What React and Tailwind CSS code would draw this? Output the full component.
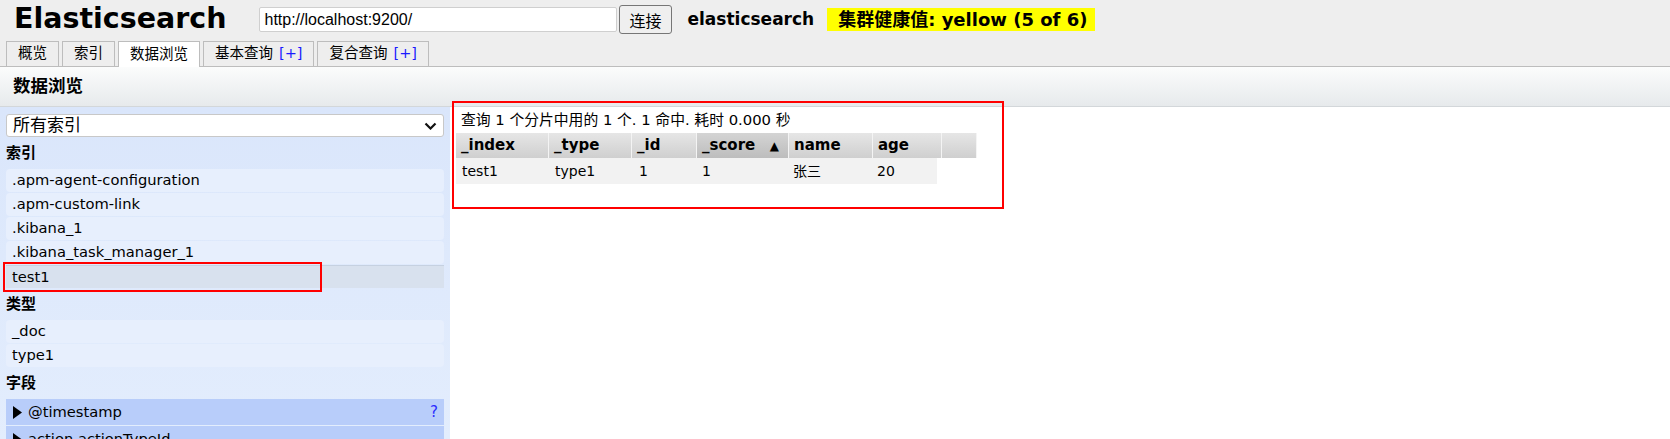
import React from "react";

const indices = [".apm-agent-configuration", ".apm-custom-link", ".kibana_1", ".kibana_task_manager_1"];
const types = ["_doc", "type1"];
const fields = ["@timestamp", "action.actionTypeId"];

const headCols = [
  { label: "_index", w: "w-[93px]" },
  { label: "_type", w: "w-[83px]" },
  { label: "_id", w: "w-[65px]" },
  { label: "_score", w: "w-[92px]", sorted: true },
  { label: "name", w: "w-[84px]" },
  { label: "age", w: "w-[69px]" },
  { label: "", w: "w-[35px]" },
];

const bodyCols = [
  { value: "test1", w: "w-[93px]" },
  { value: "type1", w: "w-[84px]" },
  { value: "1", w: "w-[63px]" },
  { value: "1", w: "w-[91px]" },
  { value: "张三", w: "w-[84px]" },
  { value: "20", w: "w-[66px]" },
];

const Tab = ({ label, plus, active }) => (
  <div
    className={`flex items-center border border-b-0 border-[#bdbdbd] px-[11px] text-[14.5px] ${
      active ? "bg-white h-[26px] -mb-px" : "bg-[#eeeeee] h-[25px]"
    }`}
  >
    {label}
    {plus && <span className="ml-[6px] text-[#1a1aff]">[+]</span>}
  </div>
);

const Heading = ({ children, h }) => (
  <div className={`${h} flex items-center font-bold text-[15px]`}>{children}</div>
);

const Row = ({ children, selected }) => (
  <div
    className={`h-[23px] mb-[1px] flex items-center pl-[6px] text-[14.7px] ${
      selected ? "bg-[#d8e1ee] border-t border-[#c6d1e1]" : "bg-[#e7effd] rounded-[4px]"
    }`}
  >
    {children}
  </div>
);

const App = () => {
  return (
    <div className="relative w-[1670px] h-[439px] overflow-hidden bg-white text-black font-['DejaVu_Sans','Noto_Sans_CJK_SC',sans-serif]">
      <div className="h-[67px] bg-[#eeeeee] border-b border-[#bdbdbd]">
        <div className="h-[39px] flex items-center">
          <h1 className="ml-[14px] text-[28.5px] leading-none font-bold">Elasticsearch</h1>
          <input
            readOnly
            value="http://localhost:9200/"
            className="ml-[33px] w-[358px] h-[25px] bg-white border border-[#cfcfcf] rounded-[2px] px-[4px] text-[16px] font-['Liberation_Sans',sans-serif] outline-none"
          />
          <button className="ml-[2px] h-[29px] px-[9px] bg-[#efefef] border border-[#767676] rounded-[3px] text-[16px] font-['Noto_Sans_CJK_SC',sans-serif]">
            连接
          </button>
          <span className="ml-[16px] text-[17px] font-bold">elasticsearch</span>
          <span className="ml-[13px] h-[23px] flex items-center bg-[#ffff00] pl-[11px] pr-[8px] text-[18px] font-bold">
            集群健康值: yellow (5 of 6)
          </span>
        </div>
        <div className="h-[27px] flex items-end gap-[3px] pl-[6px]">
          <Tab label="概览" />
          <Tab label="索引" />
          <Tab label="数据浏览" active />
          <Tab label="基本查询" plus />
          <Tab label="复合查询" plus />
        </div>
      </div>

      <div className="h-[40px] flex items-center pl-[13px] bg-gradient-to-b from-[#fbfcfc] to-[#e7eaec] border-b border-[#d3d7da]">
        <span className="text-[17.5px] font-bold">数据浏览</span>
      </div>

      <div className="flex">
        <div className="w-[450px] h-[332px] px-[6px] pt-[7px] bg-gradient-to-b from-[#dae6fb] to-[#e3edfd]">
          <div className="relative h-[23px] bg-white border border-[#c8c8c8] rounded-[3px] flex items-center pl-[6px] text-[17px]">
            所有索引
            <svg className="absolute right-[6px] top-[7px]" width="13" height="8" viewBox="0 0 13 8">
              <path d="M1.5 1.5 L6.5 6.5 L11.5 1.5" fill="none" stroke="#111" strokeWidth="2.2" />
            </svg>
          </div>
          <Heading h="h-[32px]">索引</Heading>
          {indices.map((name) => (
            <Row key={name}>{name}</Row>
          ))}
          <Row selected>test1</Row>
          <Heading h="h-[31px]">类型</Heading>
          {types.map((t) => (
            <Row key={t}>{t}</Row>
          ))}
          <Heading h="h-[31px]">字段</Heading>
          {fields.map((f, i) => (
            <div key={f} className="h-[26px] mb-[1px] flex items-center bg-[#b8cdfa] pl-[7px] pr-[6px] text-[14.7px]">
              <svg className="mr-[6px]" width="9" height="13" viewBox="0 0 9 13">
                <path d="M0 0 L9 6.5 L0 13 Z" fill="#000" />
              </svg>
              <span className="flex-1">{f}</span>
              {i === 0 && <span className="text-[#2b2bff] text-[15px]">?</span>}
            </div>
          ))}
        </div>

        <div className="flex-1 pl-[6px]">
          <div className="h-[26px] flex items-center pl-[5px] text-[14.8px]">
            查询 1 个分片中用的 1 个. 1 命中. 耗时 0.000 秒
          </div>
          <div className="flex h-[25px]">
            {headCols.map((c, i) => (
              <div
                key={i}
                className={`${c.w} flex items-center justify-between pl-[5px] pr-[9px] border-r border-[#f4f4f4] text-[15px] font-bold bg-gradient-to-b ${
                  c.sorted ? "from-[#d4d4d4] to-[#bdbdbd]" : "from-[#e6e6e6] to-[#cfcfcf]"
                }`}
              >
                <span>{c.label}</span>
                {c.sorted && <span className="text-[12px]">▲</span>}
              </div>
            ))}
          </div>
          <div className="flex h-[26px] w-fit bg-[#f2f2f2]">
            {bodyCols.map((c, i) => (
              <div key={i} className={`${c.w} flex items-center pl-[6px] text-[14px]`}>
                {c.value}
              </div>
            ))}
          </div>
        </div>
      </div>

      <div className="absolute left-[3px] top-[262px] w-[319px] h-[30px] border-2 border-[#ff0000]" />
      <div className="absolute left-[452px] top-[101px] w-[552px] h-[108px] border-2 border-[#ff0000]" />
    </div>
  );
};

export default App;
